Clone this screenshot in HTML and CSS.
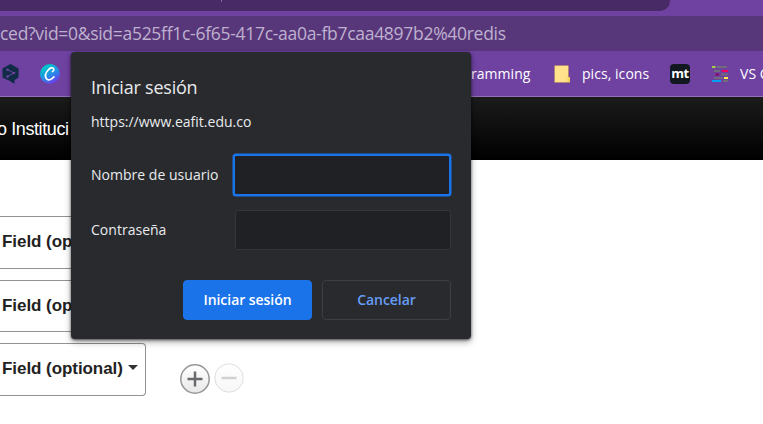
FILE: index.html
```html
<!DOCTYPE html>
<html lang="es">
<head>
<meta charset="utf-8">
<title>Iniciar sesión</title>
<link rel="stylesheet" href="styles.css">
</head>
<body>
<div class="browser">
  <div class="tabs"><div class="tab-strip"><i class="divider"></i></div></div>
  <div class="omnibox"><span>ced?vid=0&amp;sid=a525ff1c-6f65-417c-aa0a-fb7caa4897b2%40redis</span></div>
  <div class="bookmarks">
    <div class="left-icons">
      <svg width="17" height="20" viewBox="0 0 17 20"><path d="M8.500 0L16.500 4.500V13.500L12.500 16V20L8 17L.5 13.500V4.500Z" fill="#0f2b46"/><path d="M5.500 5.800L12 9L5.500 12.500" fill="none" stroke="#6f42a2" stroke-width="1"/><g fill="#6f42a2"><circle cx="5.500" cy="5.800" r="1.300"/><circle cx="12" cy="9" r="1.300"/><circle cx="5.500" cy="12.500" r="1.300"/></g></svg>
      <svg width="20" height="20" viewBox="0 0 20 20"><defs><linearGradient id="canva" x1=".2" y1="0" x2=".8" y2="1"><stop offset=".15" stop-color="#00c4cc"/><stop offset=".55" stop-color="#2789e8"/><stop offset="1" stop-color="#7d2ae8"/></linearGradient></defs><circle cx="10" cy="10" r="10" fill="url(#canva)"/><path d="M12.500 7.500C13.500 7 14.200 5.500 13.600 4.600C12.500 3 10 3.800 8.200 6C5.800 8.700 4.800 12.200 6.300 14.500C8 17 11.500 16 14 12.800" fill="none" stroke="#fff" stroke-width="1.700" stroke-linecap="round"/></svg>
    </div>
    <div class="right-marks">
      <span class="mark programming">ramming</span>
      <svg class="folder" width="16" height="18" viewBox="0 0 16 18"><path d="M.5 .5H14.500V12H16V17.500H.5Z" fill="#f3ca4f"/><path d="M1 1H14V12L12.500 13V17H1Z" fill="#ffe28b"/><path d="M13 13.500L14.500 12.500V16.500H13Z" fill="#ffe28b"/></svg>
      <span class="mark pics">pics, icons</span>
      <span class="mt">mt</span>
      <svg class="code" width="16" height="16" viewBox="0 0 16 16"><g stroke-width="2"><path d="M0 1H3.500" stroke="#a6cf43"/><path d="M5 1H15M2 5H8M9 8.500H16M2 12H11M11 15H16" stroke="#706c7b"/><path d="M10 5H16" stroke="#f5005d"/><path d="M3.500 8.500H7" stroke="#890063"/><path d="M12 12H16" stroke="#fff04a"/><path d="M0 15H9" stroke="#069ff5"/></g></svg>
      <span class="mark">VS Code</span>
    </div>
  </div>
</div>
<header class="site-header"><span>o Instituci</span></header>
<main class="search-form">
  <div class="row"><div class="field"><span>Field (optional)</span><i class="caret"></i></div></div>
  <div class="row"><div class="field"><span>Field (optional)</span><i class="caret"></i></div></div>
  <div class="row"><div class="field"><span>Field (optional)</span><i class="caret"></i></div>
    <div class="controls">
      <svg width="30" height="30" viewBox="0 0 30 30"><defs><linearGradient id="round" x2="0" y2="1"><stop stop-color="#fff"/><stop offset="1" stop-color="#e8e8e9"/></linearGradient></defs><circle cx="15" cy="15" r="14.200" fill="url(#round)" stroke="#96969a" stroke-width="1.500"/><path d="M7.500 15H22.500M15 7.500V22.500" stroke="#69696d" stroke-width="2.500"/></svg>
      <svg class="minus" width="30" height="30" viewBox="0 0 30 30"><circle cx="15" cy="15" r="14.200" fill="url(#round)" stroke="#96969a"/><path d="M7.500 15H22.500" stroke="#69696d" stroke-width="2.500"/></svg>
    </div>
  </div>
</main>
<form class="dialog">
  <h1><span>Iniciar sesión</span></h1>
  <p><span>https://www.eafit.edu.co</span></p>
  <div class="entry"><label for="user">Nombre de usuario</label><input id="user" class="focused"></div>
  <div class="entry second"><label for="pass">Contraseña</label><input id="pass" type="password"></div>
  <div class="actions"><button class="primary" type="button"><span>Iniciar sesión</span></button><button type="button"><span>Cancelar</span></button></div>
</form>
</body>
</html>
```
FILE: styles.css
```css
* { box-sizing: border-box; }
body { margin: 0; width: 763px; height: 424px; overflow: hidden; background: #fff; font-family: "Open Sans", "Noto Sans", sans-serif; }
svg { display: block; flex: none; }
.browser { height: 97px; background: #6f42a2; border-bottom: 1px solid #9271b8; }
.tabs { height: 16px; }
.tab-strip { width: 670px; height: 11px; background: #472a66; border-bottom-right-radius: 10px; padding-left: 221px; }
.divider { display: block; width: 1px; height: 2px; background: #7e6993; }
.omnibox { height: 35px; background: #57377a; color: #bfb0cf; font-size: 17.5px; line-height: 35px; letter-spacing: -.29px; white-space: nowrap; }
.bookmarks { height: 45px; display: flex; align-items: center; color: #fff; font-size: 14px; white-space: nowrap; }
.left-icons { width: 471px; flex: none; display: flex; align-items: center; gap: 21px; padding-left: 2px; }
.right-marks { display: flex; align-items: center; }
.mark { flex: none; line-height: 20px; letter-spacing: .05px; }
.programming { width: 83px; }
.pics { width: 88px; }
.folder { margin-right: 12px; }
.mt { width: 20px; height: 20px; border-radius: 4px; background: #111820; font-size: 13px; font-weight: 700; line-height: 18px; text-align: center; letter-spacing: -.5px; flex: none; }
.code { margin: 0 12px 0 22px; }
.site-header { height: 63px; background: linear-gradient(#1b1b1b, #000); color: #fff; font: 18px/64px "Liberation Sans", sans-serif; letter-spacing: -.4px; text-indent: -3px; }
.search-form { padding-top: 56px; display: grid; gap: 11px; }
.row { display: flex; height: 52.5px; }
.field { width: 146px; height: 52.5px; display: flex; align-items: center; gap: 5px; padding: 0 8px 0 2px; border: 1px solid #929292; border-left: 0; border-radius: 0 4px 4px 0; color: #222; font: bold 17px "Liberation Sans", sans-serif; letter-spacing: -.06px; white-space: nowrap; }
.caret { margin-top: -3px; border: 5px solid transparent; border-top-color: #333; border-bottom: 0; }
.controls { display: flex; gap: 4px; padding: 21px 0 0 34px; }
.minus { opacity: .3; margin-top: -1px; }
.dialog { position: absolute; left: 71px; top: 52px; width: 400px; height: 287px; padding: 23px 20px 19px; background: #292a2d; border-radius: 4px; box-shadow: 0 1px 3px #0009, 0 3px 7px #0005; color: #e8eaed; }
.dialog h1 { margin: 0; height: 24px; font-size: 18px; font-weight: 400; line-height: 24px; letter-spacing: -.22px; }
.dialog p { margin: 13px 0 23px; height: 20px; font-size: 14px; line-height: 20px; }
.entry { display: flex; align-items: center; justify-content: space-between; height: 40px; font-size: 14px; white-space: nowrap; }
.entry label { padding-bottom: 2px; letter-spacing: .02px; }
.entry.second { margin-top: 15px; }
.entry input { width: 216px; height: 40px; padding: 8px; border: 1px solid #35363a; border-radius: 3px; background: #202124; color: #e8eaed; outline: none; }
.entry input.focused { width: 218.5px; height: 42px; border: 2px solid #1a73e8; box-shadow: 0 0 0 .5px #1a73e8; }
.actions { display: flex; justify-content: flex-end; gap: 10px; margin-top: 30px; }
.actions button { width: 129px; height: 40px; padding: 0 0 1px; border: 1px solid #3c4043; border-radius: 4px; background: #292a2d; color: #669df6; font: 600 14px "Open Sans", sans-serif; letter-spacing: -.05px; }
.actions .primary { background: #1a73e8; border-color: #1a73e8; color: #fff; }
```
